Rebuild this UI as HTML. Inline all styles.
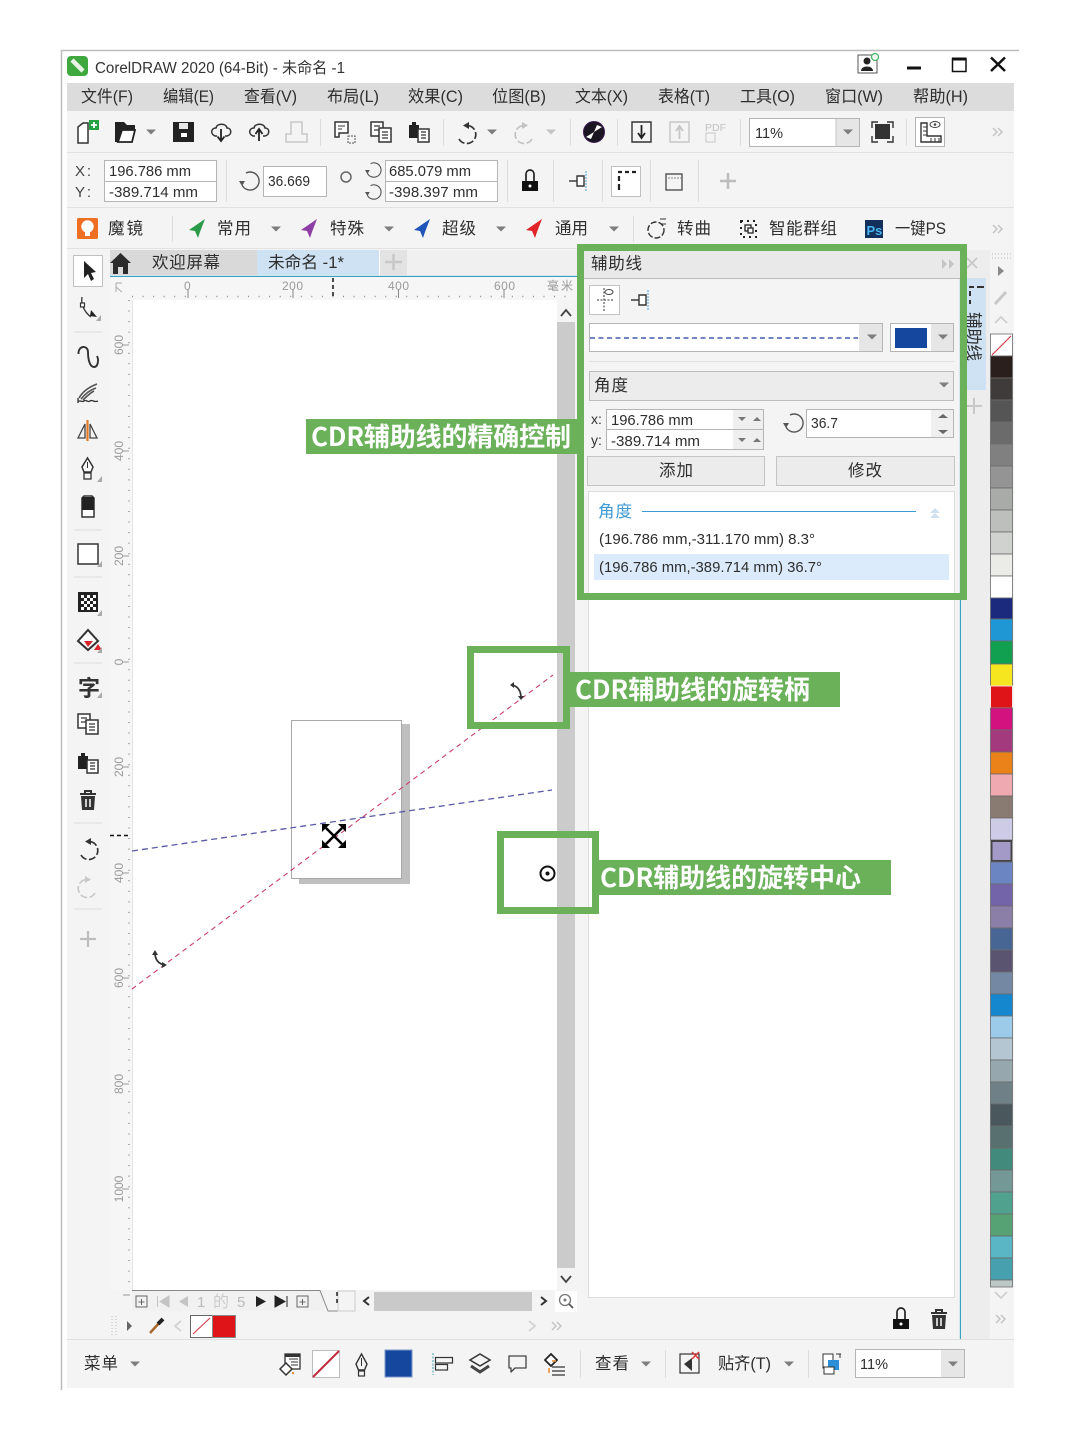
<!DOCTYPE html>
<html lang="zh"><head><meta charset="utf-8"><title>CorelDRAW</title>
<style>
html,body{margin:0;padding:0;background:#fff}
svg{display:block;filter:blur(.35px)}
text{font-family:"Liberation Sans","Noto Sans CJK SC",sans-serif;fill:#3a3a3a;font-size:15px}
.c{font-size:16.5px;fill:#2e2e2e}
.n{font-size:15px;fill:#2e2e2e}
.r{font-size:12px;fill:#9a9a9a}
.g{font-family:"Noto Sans CJK SC","Liberation Sans",sans-serif;font-size:26px;font-weight:700;fill:#fff}
.bg{fill:#f4f4f4}
.sep{stroke:#ddd;stroke-width:1}
.k{fill:none;stroke:#333;stroke-width:1.6}
.l{fill:none;stroke:#bdbdbd;stroke-width:1.6}
.box{fill:#fff;stroke:#b5b5b5;stroke-width:1}
</style></head><body>
<svg width="1080" height="1440" viewBox="0 0 1080 1440" xmlns="http://www.w3.org/2000/svg">
<defs>
<path id="dn" d="M-5-2.500H5L0 2.500Z" fill="#7d7d7d"/>
<g id="undo"><path d="M-7 5A9 9 0 1 0 1-8.500" fill="none" stroke="#333" stroke-width="1.700" stroke-dasharray="7 2.500"/><path d="M-3-8.500L3-12V-5Z" fill="#333"/></g>
<g id="doc2"><path d="M-10-10H2V4H-10Z" fill="#fff" stroke="#333" stroke-width="1.500"/><path d="M-7-6H-1M-7-2H-1" stroke="#333" stroke-width="1.300"/><path d="M-2-4H10V10H-2Z" fill="#fff" stroke="#333" stroke-width="1.500"/><path d="M1 0H7M1 3H7M1 6H7" stroke="#333" stroke-width="1.300"/></g>
<g id="paste"><path d="M-10-7H0V6H-10Z" fill="#222"/><path d="M-7-10H-3V-7H-7Z" fill="#222"/><path d="M-1-3H10V10H-1Z" fill="#fff" stroke="#333" stroke-width="1.500"/><path d="M2 0H7M2 3H7M2 6H7" stroke="#333" stroke-width="1.300"/></g>
<g id="lock"><path d="M-4-1V-8A4 4 0 0 1 4-8V-1" fill="none" stroke="#222" stroke-width="1.700"/><path d="M-8-1H8V9H-8Z" fill="#111"/><circle cx="0" cy="4" r="1.500" fill="#fff"/></g>
<g id="trash"><path d="M-8-6H8M-3-6V-9H3V-6" fill="none" stroke="#333" stroke-width="2"/><path d="M-7-4H7L6 10H-6Z" fill="#333"/><path d="M-2-1V7M2-1V7" stroke="#fff" stroke-width="1.500"/></g>
<g id="snap"><path d="M-1-5H6V5H-1Z" fill="#fff" stroke="#333" stroke-width="1.400"/><path d="M-9 0H-1" stroke="#333" stroke-width="1.400"/><path d="M8-10V11" stroke="#4aa3d8" stroke-width="1" stroke-dasharray="2 1"/></g>
<g id="rot"><path d="M-7 4A9 9 0 1 0-3-8" fill="none" stroke="#555" stroke-width="1.400"/><path d="M-10 0H-4L-7 5Z" fill="#555"/></g>
<path id="plane" d="M8-10L-8 1L-2 2L1 9L3 3Z"/>
<g id="dbl"><path d="M-5-4L-1 0L-5 4M0-4L4 0L0 4" fill="none" stroke="#c4c4c4" stroke-width="1.500"/></g>
</defs>

<rect width="1080" height="1440" fill="#fff"/>
<path d="M61.500 1390V50.500H1019" fill="none" stroke="#bcbcbc" stroke-width="1.500"/>

<!-- Title bar -->
<rect x="67" y="56" width="21" height="20" rx="4" fill="#3fa83e"/>
<path d="M72 60L83 71" stroke="#e8f3e3" stroke-width="4.500"/>
<text x="95" y="73" textLength="250" lengthAdjust="spacingAndGlyphs" style="font-size:15.500px;fill:#333">CorelDRAW 2020 (64-Bit) - 未命名 -1</text>
<path d="M858 55H877V73H858Z" fill="#fff" stroke="#555"/><circle cx="867" cy="61" r="3.500" fill="#222"/><path d="M861 71C861 65 873 65 873 71Z" fill="#222"/>
<circle cx="875" cy="57" r="3.500" fill="#fff" stroke="#45b560" stroke-width="1.200"/>
<path d="M907 68H921" stroke="#111" stroke-width="3"/>
<path d="M952.500 58.500H966V71.500H952.500Z" fill="none" stroke="#111" stroke-width="1.500"/><path d="M952 59H966" stroke="#111" stroke-width="3"/>
<path d="M991 57.500L1005 71M1005 57.500L991 71" stroke="#111" stroke-width="2.500"/>

<!-- Menu -->
<rect x="67" y="83" width="947" height="28" fill="#dcdcdc"/>
<g class="m">
<text class="c" x="81" y="102" textLength="52" lengthAdjust="spacingAndGlyphs">文件(F)</text>
<text class="c" x="163" y="102" textLength="51" lengthAdjust="spacingAndGlyphs">编辑(E)</text>
<text class="c" x="244" y="102" textLength="53" lengthAdjust="spacingAndGlyphs">查看(V)</text>
<text class="c" x="327" y="102" textLength="52" lengthAdjust="spacingAndGlyphs">布局(L)</text>
<text class="c" x="408" y="102" textLength="55" lengthAdjust="spacingAndGlyphs">效果(C)</text>
<text class="c" x="492" y="102" textLength="54" lengthAdjust="spacingAndGlyphs">位图(B)</text>
<text class="c" x="575" y="102" textLength="53" lengthAdjust="spacingAndGlyphs">文本(X)</text>
<text class="c" x="658" y="102" textLength="52" lengthAdjust="spacingAndGlyphs">表格(T)</text>
<text class="c" x="740" y="102" textLength="55" lengthAdjust="spacingAndGlyphs">工具(O)</text>
<text class="c" x="825" y="102" textLength="58" lengthAdjust="spacingAndGlyphs">窗口(W)</text>
<text class="c" x="913" y="102" textLength="55" lengthAdjust="spacingAndGlyphs">帮助(H)</text>
</g>

<!-- Toolbar areas -->
<rect class="bg" x="67" y="111" width="947" height="139"/>
<path d="M67 152.500H1014M67 207.500H1014M67 248.500H578" stroke="#e2e2e2"/>

<!-- Toolbar 1 -->
<path d="M78 143V127L83 123H88V143Z" fill="#fff" stroke="#333" stroke-width="1.500"/>
<rect x="89" y="120" width="10" height="10" fill="#27a243"/><path d="M94 122V128M91 125H97" stroke="#fff" stroke-width="1.800"/>
<path d="M115 142V122H124L127 125H135V130H122L118 142Z" fill="#222"/>
<path d="M118 142L122 130H135L132 142Z" fill="#fff" stroke="#222" stroke-width="1.800"/>
<use href="#dn" x="151" y="132"/>
<path d="M173 122H194V142H173Z" fill="#222"/><rect x="179" y="123" width="9" height="6" fill="#e8e8e8"/><rect x="181" y="133" width="6" height="4" fill="#fff"/>
<g fill="none" stroke="#333" stroke-width="1.500">
<path d="M217 136H215C210 134 211 128 216 128C217 123 226 123 227 128C232 128 232 135 227 136H225"/>
<path d="M255 136H253C248 134 249 128 254 128C255 123 264 123 265 128C270 128 270 135 265 136H263"/>
</g>
<path d="M221 129V140M217.500 136.500L221 141L224.500 136.500" fill="none" stroke="#222" stroke-width="1.800"/>
<path d="M259 141V130M255.500 134L259 129L262.500 134" fill="none" stroke="#222" stroke-width="1.800"/>
<path d="M286 142V134H291V122H302V134H307V142Z" fill="none" stroke="#c6c6c6" stroke-width="1.500"/>
<path class="sep" d="M320.500 119V146"/>
<path d="M335 122H348V133H339V137H335Z" fill="#fff" stroke="#333" stroke-width="1.500"/><path d="M338 126H345M338 129H342" stroke="#333"/><path d="M348 136H355V143H348Z" fill="none" stroke="#555" stroke-dasharray="2 1"/>
<use href="#doc2" x="381" y="132"/>
<use href="#paste" x="419" y="132"/>
<path class="sep" d="M443.500 119V146"/>
<use href="#undo" x="466" y="134"/>
<use href="#dn" x="492" y="132"/>
<use href="#undo" transform="translate(525 134) scale(-1 1)" opacity=".25"/>
<use href="#dn" x="551" y="132" opacity=".4"/>
<path class="sep" d="M570.500 119V146M617.500 119V146M740.500 119V146M906.500 119V146"/>
<circle cx="594" cy="132" r="10.500" fill="#1a1520" stroke="#3d1a55" stroke-width="1"/><path d="M594 132L586 137L591 139ZM594 132L602 127L597 125Z" fill="#fff"/>
<path d="M632 122H651V142H632Z" fill="none" stroke="#333" stroke-width="1.400"/><path d="M641.500 125V137M638 133L641.500 138L645 133" fill="none" stroke="#222" stroke-width="1.800"/>
<path d="M670 122H689V142H670Z" fill="none" stroke="#c6c6c6" stroke-width="1.400"/><path d="M679.500 139V127M676 131L679.500 126L683 131" fill="none" stroke="#c6c6c6" stroke-width="1.800"/>
<text x="705" y="131" style="font-size:10.500px;fill:#c0c0c0">PDF</text>
<rect x="706" y="133" width="9" height="9" fill="none" stroke="#c8c8c8"/>
<rect class="box" x="749.500" y="118.500" width="110" height="28"/>
<rect x="836" y="119" width="23" height="27" fill="#e6e6e6"/><path d="M836 118.500V146.500" stroke="#c4c4c4"/>
<use href="#dn" x="848" y="132"/>
<text class="n" x="755" y="138" textLength="28" lengthAdjust="spacingAndGlyphs">11%</text>
<rect x="875" y="124" width="15" height="15" fill="#333"/><path d="M872 128V122H878M887 122H893V128M893 136V142H887M878 142H872V136" fill="none" stroke="#333" stroke-width="1.400"/>
<rect class="box" x="915.500" y="117.500" width="29" height="29" stroke="#ccc"/>
<path d="M921 123V142H941V136H927V123Z" fill="#fff" stroke="#333" stroke-width="1.400"/><path d="M923 127H927M923 131H927M923 135H927M931 142V138M935 142V138M939 142V138" stroke="#333"/>
<ellipse cx="935" cy="124.500" rx="5" ry="3" fill="#fff" stroke="#444"/><circle cx="935" cy="124.500" r="1.300" fill="#444"/>
<use href="#dbl" x="998" y="132"/>

<!-- Toolbar 2 -->
<text class="n" x="75" y="176" textLength="16" style="font-size:15px;fill:#444">X:</text>
<text class="n" x="75" y="197" textLength="16" style="font-size:15px;fill:#444">Y:</text>
<rect class="box" x="104.500" y="160.500" width="112" height="41"/><path d="M104 181.500H217" stroke="#b5b5b5"/>
<text class="n" x="109" y="176" textLength="82" lengthAdjust="spacingAndGlyphs">196.786 mm</text>
<text class="n" x="109" y="197" textLength="89" lengthAdjust="spacingAndGlyphs">-389.714 mm</text>
<path class="sep" d="M226.500 160V202M507.500 160V202M553.500 160V202M602.500 160V202M650.500 160V202M698.500 160V202"/>
<use href="#rot" x="249" y="181"/>
<rect class="box" x="263.500" y="166.500" width="63" height="30"/>
<text class="n" x="268" y="186" textLength="42" lengthAdjust="spacingAndGlyphs">36.669</text>
<circle cx="346" cy="177" r="5" fill="none" stroke="#666" stroke-width="1.500"/>
<g transform="translate(373 170) scale(.8)"><use href="#rot"/></g>
<g transform="translate(373 192) scale(.8)"><use href="#rot"/></g>
<rect class="box" x="385.500" y="160.500" width="112" height="41"/><path d="M385 181.500H498" stroke="#b5b5b5"/>
<text class="n" x="389" y="176" textLength="82" lengthAdjust="spacingAndGlyphs">685.079 mm</text>
<text class="n" x="389" y="197" textLength="89" lengthAdjust="spacingAndGlyphs">-398.397 mm</text>
<use href="#lock" x="530" y="182"/>
<use href="#snap" x="578" y="181"/>
<rect x="611.500" y="166.500" width="29" height="30" fill="#fff" stroke="#c0c0c0"/>
<path d="M618 172H622M625 172H629M632 172H636M619 176V181M619 184V190" stroke="#222" stroke-width="2.200" fill="none"/>
<rect x="666" y="174" width="16" height="16" fill="none" stroke="#444" stroke-width="1.300"/><path d="M665 178H683" stroke="#888" stroke-dasharray="2 1"/>
<path d="M728 173V189M720 181H736" stroke="#bdbdbd" stroke-width="2.500"/>

<!-- Toolbar 3 -->
<rect x="77" y="218" width="21" height="21" rx="1.500" fill="#ee6f22"/><circle cx="87.500" cy="226.500" r="6.200" fill="#fff"/><rect x="85" y="231" width="5" height="5" fill="#fff"/>
<text class="c" x="108" y="234" textLength="35">魔镜</text>
<path class="sep" d="M172.500 216V242M633.500 216V242"/>
<use href="#plane" x="197" y="229" fill="#2a9a48"/>
<text class="c" x="217" y="234" textLength="34">常用</text><use href="#dn" x="276" y="229"/>
<use href="#plane" x="309" y="229" fill="#8e3fa5"/>
<text class="c" x="330" y="234" textLength="34">特殊</text><use href="#dn" x="389" y="229"/>
<use href="#plane" x="422" y="229" fill="#1f55b8"/>
<text class="c" x="442" y="234" textLength="34">超级</text><use href="#dn" x="501" y="229"/>
<use href="#plane" x="534" y="229" fill="#e02428"/>
<text class="c" x="555" y="234" textLength="33">通用</text><use href="#dn" x="614" y="229"/>
<circle cx="656" cy="230" r="8" fill="none" stroke="#333" stroke-width="1.400" stroke-dasharray="6 2"/><path d="M660 219H666M661 224H666" stroke="#333"/>
<text class="c" x="677" y="234" textLength="34">转曲</text>
<rect x="741" y="221" width="15" height="16" fill="none" stroke="#222" stroke-width="2" stroke-dasharray="2 4"/><rect x="745" y="225" width="6" height="6" fill="none" stroke="#222" stroke-width="1.300"/><rect x="748" y="228" width="5" height="5" fill="#fff" stroke="#222" stroke-width="1.300"/>
<text class="c" x="769" y="234" textLength="68">智能群组</text>
<rect x="865" y="220" width="18" height="18" fill="#13305c"/><text x="866.500" y="235" style="font-size:13px;fill:#45b4f0;font-weight:700">Ps</text>
<text class="c" x="895" y="234" textLength="51" lengthAdjust="spacingAndGlyphs">一键PS</text>
<use href="#dbl" x="998" y="229"/>

<!-- Left toolbox -->
<rect x="67" y="250" width="43" height="1090" fill="#f4f4f4"/>
<rect x="73.500" y="255.500" width="29" height="31" fill="#fff" stroke="#c0c0c0"/>
<path d="M84 261V278L88 274L91 281L94 279L91 273L96 272Z" fill="#222"/>
<!-- shape tool -->
<path d="M82 297C81 303 83 311 91 317" fill="none" stroke="#333" stroke-width="1.300"/>
<rect x="80.500" y="303" width="4" height="4" fill="#fff" stroke="#333" stroke-width="1.200"/>
<path d="M91 310L97 317L90 316Z" fill="#222"/><path d="M101 315V321H96Z" fill="#aaa"/>
<!-- freehand curve -->
<path d="M78.500 354C78 345 88 345 88 352C88 360 90 367 94 367C98 367 99 360 97 356" fill="none" stroke="#333" stroke-width="1.900"/>
<!-- artistic media -->
<path d="M79 398C83 391 89 387 97 384M81 399C85 394 90 390 96 388M83 400C87 396 90 393 94 391" fill="none" stroke="#555" stroke-width="1.600"/>
<path d="M78 403V398M78 402C80 399 82 403 84 401C86 399 88 403 90 401C92 399 94 403 98 401" fill="none" stroke="#333" stroke-width="1.300"/>
<!-- mirror -->
<path d="M85 424L78 438H85ZM90 424L97 438H90Z" fill="none" stroke="#444" stroke-width="1.300"/><path d="M87.500 420V441" stroke="#e47a28" stroke-width="2.200"/>
<!-- nib -->
<path d="M87.500 458L82 467L84 472H91L93 467Z" fill="#fff" stroke="#333" stroke-width="1.500"/><path d="M87.500 462V468" stroke="#333"/>
<rect x="84" y="473" width="7" height="6" fill="none" stroke="#333" stroke-width="1.300"/><path d="M102 476V482H97Z" fill="#aaa"/>
<!-- eraser -->
<path d="M82 498L84 496H92L94 498V517H82Z" fill="#fff" stroke="#333" stroke-width="1.500"/><path d="M82 497H94V510H82Z" fill="#222"/>
<path class="sep" d="M74 332H102M74 530H102M74 577H102M74 663H102M74 823H102M74 909H102"/>
<rect x="78" y="544" width="20" height="20" fill="#fff" stroke="#333" stroke-width="1.500"/><path d="M102 561V567H97Z" fill="#aaa"/>
<g fill="#222"><rect x="78" y="592" width="20" height="20"/></g>
<path d="M81 595h3v3h-3zM87 595h3v3h-3zM93 595h3v3h-3zM84 598h3v3h-3zM90 598h3v3h-3zM81 601h3v3h-3zM87 601h3v3h-3zM93 601h3v3h-3zM84 604h3v3h-3zM90 604h3v3h-3zM81 607h3v3h-3zM87 607h3v3h-3zM93 607h3v3h-3z" fill="#fff"/>
<path d="M102 610V616H97Z" fill="#aaa"/>
<path d="M78 641L88 630L98 641L88 650Z" fill="#fff" stroke="#333" stroke-width="2"/><path d="M84 641H93L88 647Z" fill="#d8262a"/><path d="M98 644L102 650H94Z" fill="#d8262a"/>
<path d="M102 647V653H97Z" fill="#aaa"/>
<text x="78" y="696" style="font-size:22px;font-weight:700;fill:#333">字</text><path d="M102 692V698H97Z" fill="#aaa"/>
<use href="#doc2" x="88" y="724"/>
<use href="#paste" x="88" y="763"/>
<use href="#trash" x="88" y="800"/>
<use href="#undo" x="88" y="850"/>
<use href="#undo" transform="translate(88 888) scale(-1 1)" opacity=".22"/>
<path d="M88 931V947M80 939H96" stroke="#bdbdbd" stroke-width="2.200"/>

<!-- Tabs -->
<rect x="110" y="250" width="147" height="25" fill="#d9d9d9"/>
<rect x="257" y="250" width="122" height="25" fill="#cfe2f3"/>
<rect x="380" y="250" width="27" height="25" fill="#e3e3e3"/>
<rect x="407" y="250" width="171" height="25" fill="#f0f0f0"/>
<path d="M110 263L120.500 253L131 263H128V274H123V267H118V274H113V263Z" fill="#2b2b2b"/>
<text class="c" x="152" y="268" textLength="68">欢迎屏幕</text>
<text class="c" x="268" y="268" textLength="76" lengthAdjust="spacingAndGlyphs">未命名 -1*</text>
<path d="M393.500 254V270M385 262H402" stroke="#c8c8c8" stroke-width="2.500"/>
<path d="M110 276.500H578" stroke="#3a9fc0" stroke-width="1.500"/>

<!-- Rulers -->
<rect x="110" y="277" width="468" height="23" fill="#f6f6f6"/>
<rect x="110" y="277" width="22" height="1015" fill="#f6f6f6"/>
<path d="M132 296.500H575" stroke="#666" stroke-width="1.500" stroke-dasharray="1 9.550" opacity=".7"/>
<path d="M129 300V1295" stroke="#666" stroke-width="1.500" stroke-dasharray="1 9.550" opacity=".7"/>
<path d="M132.500 300V1292" stroke="#e4e4e4"/>
<path d="M188 289V298M293 289V298M398.500 289V298M504 289V298" stroke="#888"/>
<text class="r" x="184" y="290">0</text>
<text class="r" x="282" y="290" textLength="21">200</text>
<text class="r" x="388" y="290" textLength="21">400</text>
<text class="r" x="494" y="290" textLength="21">600</text>
<text class="r" x="547" y="290" textLength="26">毫米</text>
<path d="M116 283H122M116 283V292M116 287L122 292" stroke="#aaa" fill="none"/>
<path d="M333 278V298" stroke="#111" stroke-width="1.500" stroke-dasharray="4 3"/>
<path d="M110 835.500H130" stroke="#111" stroke-width="1.500" stroke-dasharray="4 3"/>
<g class="r">
<text class="r" transform="translate(123 345) rotate(-90)" text-anchor="middle">600</text>
<text class="r" transform="translate(123 451) rotate(-90)" text-anchor="middle">400</text>
<text class="r" transform="translate(123 556) rotate(-90)" text-anchor="middle">200</text>
<text class="r" transform="translate(123 662) rotate(-90)" text-anchor="middle">0</text>
<text class="r" transform="translate(123 767) rotate(-90)" text-anchor="middle">200</text>
<text class="r" transform="translate(123 873) rotate(-90)" text-anchor="middle">400</text>
<text class="r" transform="translate(123 978) rotate(-90)" text-anchor="middle">600</text>
<text class="r" transform="translate(123 1084) rotate(-90)" text-anchor="middle">800</text>
<text class="r" transform="translate(123 1189) rotate(-90)" text-anchor="middle">1000</text>
</g>
<path d="M122 345H129M122 451H129M122 556H129M122 662H129M122 767H129M122 873H129M122 978H129M122 1084H129M122 1189H129" stroke="#999"/>

<!-- Canvas -->
<rect x="133" y="300" width="424" height="990" fill="#fff"/>
<rect x="299" y="724" width="111" height="160" fill="#bfbfbf"/>
<rect x="291.500" y="720.500" width="110" height="158" fill="#fff" stroke="#a8a8a8"/>
<path d="M132 851L552 790" stroke="#5a5aa8" stroke-width="1.300" stroke-dasharray="6 4" fill="none"/>
<path d="M132 989L553 675" stroke="#c9406a" stroke-width="1.100" stroke-dasharray="5 4" fill="none"/>
<g transform="translate(334 836)"><path d="M-8-8L8 8M8-8L-8 8" stroke="#000" stroke-width="2.500"/><path d="M-12-12H-4L-12-4ZM12-12H4L12-4ZM-12 12H-4L-12 4ZM12 12H4L12 4Z" fill="#000"/></g>
<!-- rotate handles -->
<path d="M155 953C155 959 158 964 165 965" fill="none" stroke="#333" stroke-width="1.800"/><path d="M152 955L155 950L158 955ZM162 962L167 965L162 968Z" fill="#333"/>
<path d="M512 685C517 686 521 690 521 698" fill="none" stroke="#333" stroke-width="1.800"/><path d="M514 682L510 685L514 688ZM518 696L521 700L524 696Z" fill="#333"/>
<circle cx="547.500" cy="873.500" r="7" fill="none" stroke="#111" stroke-width="2"/><circle cx="547.500" cy="873.500" r="2" fill="#111"/>

<!-- Vertical scrollbar -->
<rect x="557" y="300" width="21" height="1000" fill="#f4f4f4"/>
<rect x="557" y="322" width="18" height="946" fill="#cbcbcb"/>
<path d="M561 316L566 310L571 316M561 1276L566 1282L571 1276" fill="none" stroke="#444" stroke-width="1.800"/>
<path d="M578.500 600V1295M583.500 600V1295" stroke="#dedede"/>

<!-- Right docker -->
<rect x="578" y="250" width="382" height="1090" fill="#f4f4f4"/>
<path d="M960.500 250V1340" stroke="#3a9fc0" stroke-width="1.300"/>
<rect x="961" y="250" width="29" height="1090" fill="#ededed"/>
<rect x="961" y="278" width="25" height="112" fill="#cfe2f3"/>
<path d="M967 258L977 268M977 258L967 268" stroke="#c8c8c8" stroke-width="1.800"/>
<path d="M969 287H974M977 287H984M970 291V296M970 300V304" stroke="#333" stroke-width="2"/>
<text transform="translate(968 312) rotate(90)" style="font-size:16.500px;fill:#2e2e2e" textLength="49">辅助线</text>
<path d="M974 398V414M966 406H982" stroke="#c8c8c8" stroke-width="2"/>

<rect x="584" y="251" width="376" height="27" fill="#e9e9e9"/>
<path d="M584 278.500H960" stroke="#bbb"/>
<text class="c" x="591" y="269" textLength="51">辅助线</text>
<path d="M942 259L947 264L942 269ZM949 259L954 264L949 269Z" fill="#c4c4c4"/>
<rect x="589.500" y="285.500" width="30" height="29" fill="#fff" stroke="#c4c4c4"/>
<path d="M597 300H613M604 288V312" stroke="#333" stroke-dasharray="2 1.500"/><ellipse cx="609" cy="292" rx="4" ry="2.500" fill="#fff" stroke="#444"/>
<use href="#snap" x="640" y="300"/>
<rect class="box" x="589.500" y="323.500" width="293" height="28"/>
<rect x="859" y="324" width="23" height="27" fill="#e6e6e6"/>
<path d="M590 338H858" stroke="#1c3f9a" stroke-width="1.200" stroke-dasharray="5 3.500"/>
<use href="#dn" x="872" y="337"/>
<rect class="box" x="890.500" y="323.500" width="63" height="28"/>
<rect x="931" y="324" width="22" height="27" fill="#e6e6e6"/><rect x="895" y="328" width="32" height="20" fill="#15479e"/>
<use href="#dn" x="943" y="337"/>
<path d="M589 361.500H954" stroke="#e0e0e0"/>
<rect x="589.500" y="371.500" width="364" height="29" fill="#ececec" stroke="#bdbdbd"/>
<text class="c" x="594" y="391" textLength="34">角度</text>
<use href="#dn" x="944" y="385"/>
<text class="n" x="591" y="424" style="font-size:14px;fill:#333">x:</text>
<text class="n" x="591" y="445" style="font-size:14px;fill:#333">y:</text>
<rect class="box" x="606.500" y="409.500" width="157" height="40"/>
<rect x="733" y="410" width="30" height="39" fill="#efefef"/>
<path d="M606 429.500H763" stroke="#b5b5b5"/>
<path d="M738 417H746L742 421ZM738 438H746L742 442ZM753 421H761L757 417ZM753 442H761L757 438Z" fill="#777"/>
<text class="n" x="611" y="425" textLength="82" lengthAdjust="spacingAndGlyphs">196.786 mm</text>
<text class="n" x="611" y="446" textLength="89" lengthAdjust="spacingAndGlyphs">-389.714 mm</text>
<use href="#rot" x="793" y="423"/>
<rect class="box" x="806.500" y="409.500" width="147" height="28"/>
<rect x="931" y="410" width="22" height="27" fill="#efefef"/><path d="M938 418H948L943 414ZM938 430H948L943 434Z" fill="#666"/>
<text class="n" x="811" y="428" textLength="27" lengthAdjust="spacingAndGlyphs">36.7</text>
<rect x="587.500" y="456.500" width="177" height="29" fill="#ececec" stroke="#c4c4c4"/>
<rect x="776.500" y="456.500" width="178" height="29" fill="#ececec" stroke="#c4c4c4"/>
<text class="c" x="659" y="476" textLength="34">添加</text>
<text class="c" x="848" y="476" textLength="34">修改</text>
<rect x="588.500" y="491.500" width="366" height="806" fill="#fff" stroke="#dddddd"/>
<text x="598" y="517" style="font-size:16.500px;fill:#3e9ad6" textLength="34">角度</text>
<path d="M642 511.500H916" stroke="#3e9ad6"/>
<path d="M930 513L935 508L940 513ZM930 518L935 513L940 518Z" fill="#cfe0ee"/>
<text class="n" x="599" y="544" textLength="216" lengthAdjust="spacingAndGlyphs">(196.786 mm,-311.170 mm) 8.3°</text>
<rect x="594" y="554" width="355" height="26" fill="#dcebfb"/>
<text class="n" x="599" y="572" textLength="223" lengthAdjust="spacingAndGlyphs">(196.786 mm,-389.714 mm) 36.7°</text>
<use href="#lock" x="901" y="1320"/>
<use href="#trash" x="939" y="1319"/>

<!-- Palette -->
<rect x="990" y="250" width="24" height="1090" fill="#f4f4f4"/>
<path d="M992 254H1012M992 258H1012" stroke="#bbb" stroke-dasharray="1 2"/>
<path d="M998 266L1004 271L998 276Z" fill="#888"/>
<path d="M995 304L1006 292" stroke="#c8c8c8" stroke-width="3"/>
<path d="M995 323L1001 317L1007 323" fill="none" stroke="#cfcfcf" stroke-width="1.800"/>
<g stroke="#6b6b6b" stroke-width=".8">
<rect x="990.500" y="334" width="22" height="22" fill="#fff"/>
<rect x="990.500" y="356" width="22" height="22" fill="#2a1f1c"/>
<rect x="990.500" y="378" width="22" height="22" fill="#3f3b3a"/>
<rect x="990.500" y="400" width="22" height="22" fill="#555"/>
<rect x="990.500" y="422" width="22" height="22" fill="#6b6b6b"/>
<rect x="990.500" y="444" width="22" height="22" fill="#808080"/>
<rect x="990.500" y="466" width="22" height="22" fill="#949494"/>
<rect x="990.500" y="488" width="22" height="22" fill="#a8aba8"/>
<rect x="990.500" y="510" width="22" height="22" fill="#bcbfbc"/>
<rect x="990.500" y="532" width="22" height="22" fill="#d0d2d0"/>
<rect x="990.500" y="554" width="22" height="22" fill="#ebebe8"/>
<rect x="990.500" y="576" width="22" height="22" fill="#fff"/>
<rect x="990.500" y="598" width="22" height="21" fill="#1c2a7d"/>
<rect x="990.500" y="619" width="22" height="22" fill="#1e97d4"/>
<rect x="990.500" y="641" width="22" height="23" fill="#11a04f"/>
<rect x="990.500" y="664" width="22" height="22" fill="#f5e61f"/>
<rect x="990.500" y="686" width="22" height="22" fill="#de1419" stroke="#fff"/>
<rect x="990.500" y="708" width="22" height="22" fill="#d3117f"/>
<rect x="990.500" y="730" width="22" height="22" fill="#a33a7d"/>
<rect x="990.500" y="752" width="22" height="22" fill="#ea8119"/>
<rect x="990.500" y="774" width="22" height="22" fill="#eeaab0"/>
<rect x="990.500" y="796" width="22" height="22" fill="#8a7b72"/>
<rect x="990.500" y="818" width="22" height="22" fill="#cdcbe5"/>
<rect x="991.500" y="841" width="20" height="20" fill="#a39ac8" stroke="#444" stroke-width="2"/>
<rect x="990.500" y="862" width="22" height="22" fill="#6a85c2"/>
<rect x="990.500" y="884" width="22" height="22" fill="#7363a8"/>
<rect x="990.500" y="906" width="22" height="22" fill="#8b7fa8"/>
<rect x="990.500" y="928" width="22" height="22" fill="#476694"/>
<rect x="990.500" y="950" width="22" height="22" fill="#5a5470"/>
<rect x="990.500" y="972" width="22" height="22" fill="#7588a3"/>
<rect x="990.500" y="994" width="22" height="22" fill="#1487cf"/>
<rect x="990.500" y="1016" width="22" height="22" fill="#9ccbe9"/>
<rect x="990.500" y="1038" width="22" height="22" fill="#b5c6d3"/>
<rect x="990.500" y="1060" width="22" height="22" fill="#97a7ae"/>
<rect x="990.500" y="1082" width="22" height="22" fill="#6f8186"/>
<rect x="990.500" y="1104" width="22" height="22" fill="#4a575c"/>
<rect x="990.500" y="1126" width="22" height="22" fill="#597070"/>
<rect x="990.500" y="1148" width="22" height="22" fill="#418a7c"/>
<rect x="990.500" y="1170" width="22" height="22" fill="#739896"/>
<rect x="990.500" y="1192" width="22" height="22" fill="#50a28f"/>
<rect x="990.500" y="1214" width="22" height="22" fill="#57a274"/>
<rect x="990.500" y="1236" width="22" height="22" fill="#5ab5c4"/>
<rect x="990.500" y="1258" width="22" height="22" fill="#46a0ad"/>
<rect x="990.500" y="1280" width="22" height="7" fill="#bcc8c6"/>
</g>
<path d="M992 355L1011 336" stroke="#d94050" stroke-width="1.200"/>
<path d="M995 1292L1001 1298L1007 1292" fill="none" stroke="#cfcfcf" stroke-width="1.800"/>
<use href="#dbl" x="1001" y="1319"/>

<!-- Page nav row -->
<rect x="110" y="1290" width="468" height="50" fill="#f4f4f4"/>
<rect x="132" y="1290" width="192" height="21" fill="#f1f1f1"/>
<path d="M132 1290.500H320L328 1311H338" fill="none" stroke="#888"/>
<path d="M123 1295H130" stroke="#999"/>
<rect x="136" y="1296" width="11" height="11" fill="none" stroke="#666"/><path d="M141.500 1299V1305M138.500 1302H144.500" stroke="#666"/>
<path d="M157.500 1296V1307M169 1296L160 1301.500L169 1307Z" stroke="#c4c4c4" fill="#c4c4c4"/>
<path d="M188 1296L179 1301.500L188 1307Z" fill="#c4c4c4"/>
<text x="197" y="1307" style="font-size:15px;fill:#bbb">1</text>
<text x="213" y="1307" textLength="17" style="font-size:16px;fill:#ccc">的</text>
<text x="237" y="1307" style="font-size:15px;fill:#bbb">5</text>
<path d="M256 1296L266 1301.500L256 1307Z" fill="#222"/>
<path d="M275 1296L285 1301.500L275 1307ZM287 1296V1307" fill="#222" stroke="#222"/>
<rect x="297" y="1296" width="11" height="11" fill="none" stroke="#666"/><path d="M302.500 1299V1305M299.500 1302H305.500" stroke="#666"/>
<rect x="338" y="1291" width="17" height="20" fill="#f4f4f4" stroke="#ccc"/>
<path d="M337 1292V1306" stroke="#222" stroke-width="1.500" stroke-dasharray="4 3"/>
<path d="M369 1297L364 1301L369 1305M541 1297L546 1301L541 1305" fill="none" stroke="#333" stroke-width="2"/>
<rect x="374" y="1292" width="158" height="19" fill="#c9c9c9"/>
<rect x="555" y="1291" width="22" height="21" fill="#fff"/>
<circle cx="565" cy="1300" r="5.500" fill="none" stroke="#777" stroke-width="1.300"/><path d="M569 1304L573 1308" stroke="#555" stroke-width="1.800"/><circle cx="565" cy="1300" r="1.500" fill="#777"/>

<!-- Colour row -->
<path d="M112 1316V1335M116 1316V1335" stroke="#bbb" stroke-dasharray="1 2"/>
<path d="M127 1321L132 1326L127 1331Z" fill="#666"/>
<path d="M150 1333L160 1322" stroke="#a8662b" stroke-width="2.500"/><path d="M158 1324L163 1319" stroke="#222" stroke-width="4"/>
<path d="M181 1321L175 1326L181 1331M529 1321L535 1326L529 1331" fill="none" stroke="#d4d4d4" stroke-width="1.800"/>
<use href="#dbl" x="557" y="1326"/>
<rect x="190.500" y="1315.500" width="22" height="22" fill="#fff" stroke="#666"/><path d="M193 1334L210 1318" stroke="#d94050" stroke-width="1.200"/>
<rect x="212.500" y="1315.500" width="23" height="22" fill="#de1419" stroke="#888"/>

<!-- Status bar -->
<rect x="67" y="1340" width="947" height="48" fill="#f4f4f4"/>
<path d="M67 1339.500H1014" stroke="#e0e0e0"/>
<text class="c" x="84" y="1369" textLength="34">菜单</text><use href="#dn" x="135" y="1364"/>
<rect x="285" y="1354" width="15" height="15" fill="#fff" stroke="#333" stroke-width="1.300"/><path d="M285 1355.500H300" stroke="#333" stroke-width="3"/><path d="M289 1359H298M291 1362H298M291 1365H298" stroke="#333"/>
<path d="M280 1369L286 1363L292 1369L286 1375Z" fill="#fff" stroke="#333" stroke-width="1.500"/><circle cx="293" cy="1373" r="1.100" fill="#e8892a"/>
<rect x="312.500" y="1350.500" width="27" height="27" fill="#fff" stroke="#bdbdbd"/><path d="M313 1377L339 1351" stroke="#c22a3d" stroke-width="2"/>
<path d="M361.500 1354L356 1364L358.500 1370H364.500L367 1364Z" fill="none" stroke="#333" stroke-width="1.400"/><path d="M361.500 1358V1366" stroke="#333"/><rect x="358.500" y="1371" width="6" height="5" fill="none" stroke="#333" stroke-width="1.200"/>
<rect x="385" y="1350" width="27" height="27" fill="#15479e" stroke="#7a96c8"/>
<path d="M433 1353V1375" stroke="#3a9fc0" stroke-dasharray="2 1.500"/>
<rect x="435.500" y="1357.500" width="17" height="5.500" fill="none" stroke="#333" stroke-width="1.200"/><rect x="435.500" y="1364.500" width="12" height="5.500" fill="none" stroke="#333" stroke-width="1.200"/>
<path d="M480 1354L490 1360L480 1366L470 1360Z" fill="none" stroke="#333" stroke-width="1.500"/><path d="M471 1366L480 1372L489 1366" fill="none" stroke="#444" stroke-width="3"/>
<path d="M509 1356H526V1368H515L511 1372V1368H509Z" fill="none" stroke="#444" stroke-width="1.300" stroke-linejoin="round"/>
<path d="M545 1360L551 1354L557 1360L551 1366Z" fill="#fff" stroke="#222" stroke-width="1.800"/><path d="M552 1361H556M549 1368V1373" stroke="#e8892a" stroke-width="1.500"/><path d="M552 1367H565M552 1371H565M552 1375H565" stroke="#333" stroke-width="1.300"/>
<path class="sep" d="M580.500 1350V1378M665.500 1350V1378M808.500 1350V1378"/>
<text class="c" x="595" y="1369" textLength="34">查看</text><use href="#dn" x="646" y="1364"/>
<rect x="680" y="1354" width="19" height="19" fill="none" stroke="#333" stroke-width="1.200"/><path d="M684 1364L692 1358V1371Z" fill="#333"/><path d="M692 1352L699 1359M699 1352L692 1359" stroke="#d93a3a" stroke-width="1.500"/>
<text class="c" x="718" y="1369" textLength="53" lengthAdjust="spacingAndGlyphs">贴齐(T)</text><use href="#dn" x="789" y="1364"/>
<rect x="823" y="1354" width="10" height="14" fill="#fff" stroke="#333"/><rect x="828" y="1360" width="11" height="10" fill="#2a8fd6"/><rect x="824" y="1367" width="10" height="7" fill="#fff" stroke="#333"/><path d="M836 1354H841M840 1354V1358" stroke="#333"/>
<rect class="box" x="855.500" y="1349.500" width="109" height="28"/>
<rect x="941" y="1350" width="23" height="27" fill="#e6e6e6"/>
<use href="#dn" x="953" y="1364"/>
<text class="n" x="860" y="1369" textLength="28" lengthAdjust="spacingAndGlyphs">11%</text>

<!-- Green annotation boxes -->
<g fill="none" stroke="#6ab15a" stroke-width="7">
<rect x="580.500" y="247.500" width="383" height="349"/>
<rect x="470.500" y="649.500" width="96" height="76"/>
<rect x="500.500" y="834.500" width="95" height="76"/>
</g>
<rect x="306" y="419" width="272" height="35" fill="#6ab15a"/>
<text class="g" x="311" y="446" textLength="260">CDR辅助线的精确控制</text>
<rect x="570" y="672" width="270" height="35" fill="#6ab15a"/>
<text class="g" x="575" y="699" textLength="235">CDR辅助线的旋转柄</text>
<rect x="599" y="860" width="292" height="35" fill="#6ab15a"/>
<text class="g" x="600" y="887" textLength="261">CDR辅助线的旋转中心</text>
</svg>
</body></html>
